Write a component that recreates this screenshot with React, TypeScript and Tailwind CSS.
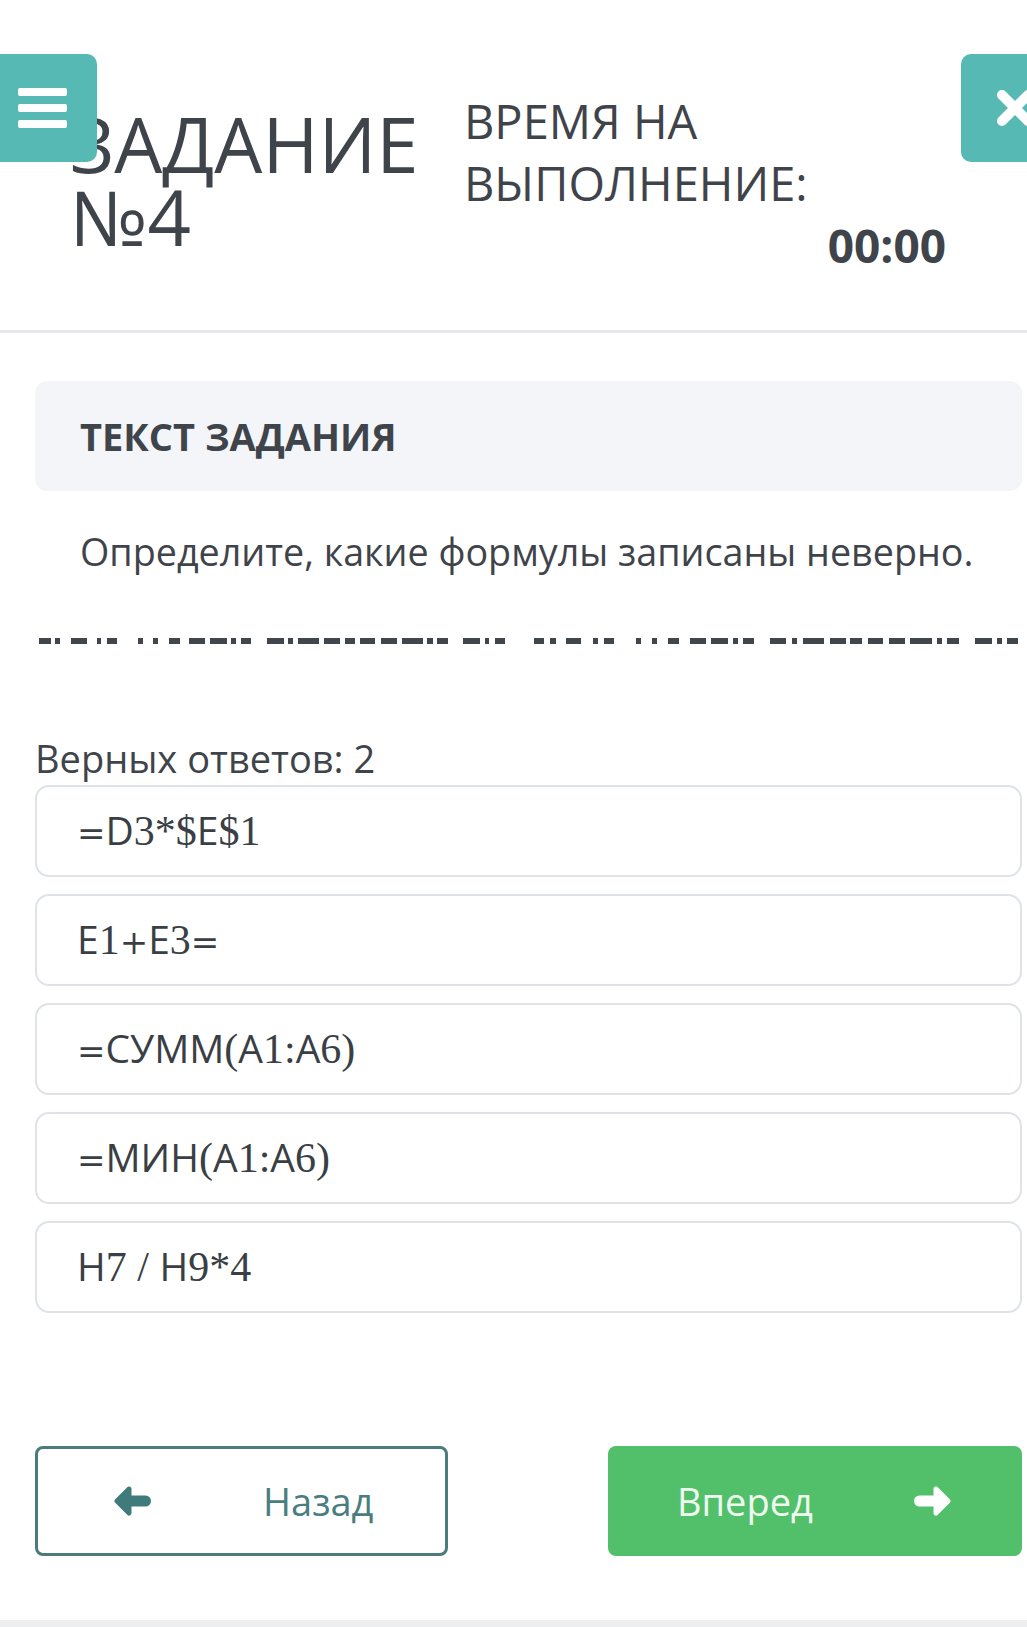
const OPTIONS = ["=D3*$E$1", "E1+E3=", "=СУММ(A1:A6)", "=МИН(A1:A6)", "H7 / H9*4"];

// dash segments of the broken rule under the task text, page x coords
const DASHES: [number, number][] = [
    [39, 51], [55, 60], [71, 87], [97, 101], [107, 117],
    [138, 143], [153, 158], [169, 180], [189, 205], [210, 227], [231, 236], [241, 251],
    [267, 284], [288, 293], [298, 319], [324, 340], [345, 355], [360, 375], [381, 397], [402, 423], [427, 433], [437, 448],
    [463, 480], [485, 489], [495, 505],
    [534, 544], [550, 556], [566, 581], [593, 598], [604, 614],
    [636, 641], [652, 657], [668, 679], [690, 706], [711, 728], [733, 738], [743, 754],
    [770, 786], [792, 797], [803, 824], [830, 846], [850, 862], [868, 883], [889, 905], [910, 932], [937, 942], [947, 959],
    [975, 992], [997, 1002], [1007, 1018],
];

// letters in sans, digits in a serif face, = and + wide like the math renderer draws them
const Formula = ({ text }: { text: string }) => {
    const parts = text.match(/[A-Za-zА-Яа-я]+|[=+]|[^A-Za-zА-Яа-я=+]+/g) ?? [];
    return (
        <span className="whitespace-pre">
            {parts.map((p, i) => {
                if (/[A-Za-zА-Яа-я]/.test(p))
                    return <span key={i} className="font-['Open_Sans',sans-serif] text-[39px]">{p}</span>;
                if (p === "=" || p === "+")
                    return <span key={i} className="font-['DejaVu_Serif',serif] text-[34px] font-light">{p}</span>;
                return <span key={i} className="font-['Liberation_Serif',serif] text-[42px]">{p}</span>;
            })}
        </span>
    );
};

const Arrow = ({ dir, color }: { dir: "left" | "right"; color: string }) => (
    <svg width="38" height="32" viewBox="0 0 38 32" className={dir === "right" ? "-scale-x-100" : ""}>
        <path d="M15 4 L3 16 L15 28 Z" fill={color} stroke={color} strokeWidth="5" strokeLinejoin="round" />
        <rect x="11" y="10.5" width="26" height="11" rx="5.5" fill={color} />
    </svg>
);

export default function App() {
    return (
        <div className="relative w-[1027px] h-[1627px] overflow-hidden bg-white text-[#3f444b] font-['Open_Sans',sans-serif]">
            {/* Header */}
            <header className="relative h-[333px] border-b-[3px] border-[#e6e8eb]">
                <div className="flex">
                    <div className="ml-[70px] mt-[107px] w-[394px] text-[76px] leading-[73px]">
                        ЗАДАНИЕ
                        <br />
                        №4
                    </div>
                    <div className="mt-[90px] w-[482px] text-[47px] leading-[62px]">
                        <div>ВРЕМЯ НА</div>
                        <div>ВЫПОЛНЕНИЕ:</div>
                        <div className="text-right text-[46px] font-bold">00:00</div>
                    </div>
                </div>

                {/* menu button */}
                <div className="absolute left-0 top-[54px] w-[97px] h-[108px] rounded-r-[10px] bg-[#56b9b3] flex flex-col items-start justify-center gap-[8px] pl-[18px]">
                    <span className="block w-[49px] h-[8px] rounded-[2px] bg-white" />
                    <span className="block w-[49px] h-[8px] rounded-[2px] bg-white" />
                    <span className="block w-[49px] h-[8px] rounded-[2px] bg-white" />
                </div>

                {/* close button */}
                <div className="absolute left-[961px] top-[54px] w-[100px] h-[108px] rounded-l-[10px] bg-[#56b9b3]">
                    <svg className="absolute left-[35px] top-[35px]" width="38" height="38" viewBox="0 0 38 38">
                        <path d="M6 6 L32 32 M32 6 L6 32" stroke="white" strokeWidth="10" strokeLinecap="round" />
                    </svg>
                </div>
            </header>

            {/* Task */}
            <section className="pl-[35px] pr-[5px]">
                <div className="mt-[48px] h-[110px] rounded-[12px] bg-[#f3f5f8] flex items-center pl-[45px]">
                    <h2 className="text-[38px] font-bold">ТЕКСТ ЗАДАНИЯ</h2>
                </div>

                <p className="mt-[35px] pl-[45px] text-[37.7px] leading-[52px]">
                    Определите, какие формулы записаны неверно.
                </p>

                <svg className="mt-[60px] -ml-[35px] block" width="1027" height="6" viewBox="0 0 1027 6">
                    {DASHES.map(([a, b]) => (
                        <rect key={a} x={a} y="0" width={b - a} height="6" fill="#41464d" />
                    ))}
                </svg>

                <div className="mt-[92px] text-[38px] leading-[45px]">Верных ответов: 2</div>

                <div className="mt-[4px] flex flex-col gap-[17px]">
                    {OPTIONS.map((o) => (
                        <div
                            key={o}
                            className="h-[92px] border-2 border-[#dfe3e7] rounded-[14px] flex items-center pl-[40px] text-[#3a3f45]"
                        >
                            <Formula text={o} />
                        </div>
                    ))}
                </div>

                {/* Navigation */}
                <div className="mt-[133px] flex justify-between">
                    <button className="w-[413px] h-[110px] border-[3px] border-[#4b7b7c] rounded-[8px] flex items-center pl-[76px] text-[#4a7d7e]">
                        <Arrow dir="left" color="#3f7b7b" />
                        <span className="ml-[111px] text-[38px]">Назад</span>
                    </button>
                    <button className="w-[414px] h-[110px] rounded-[8px] bg-[#52c06a] flex items-center pl-[69px] pr-[71px] text-[#eefaf0]">
                        <span className="text-[38px]">Вперед</span>
                        <span className="ml-auto flex">
                            <Arrow dir="right" color="#ffffff" />
                        </span>
                    </button>
                </div>
            </section>

            <div className="absolute left-0 bottom-0 w-full h-[7px] bg-[#eceef0]" />
        </div>
    );
}
